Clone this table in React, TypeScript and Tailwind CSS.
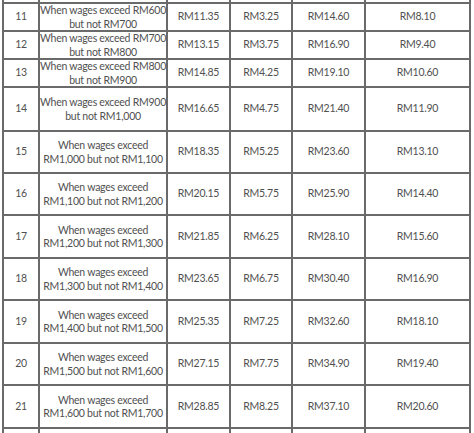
import React from "react";

type Row = [string, string, string, string, string, string, string];

const rows: Row[] = [
  ["11", "When wages exceed RM600", "but not RM700", "RM11.35", "RM3.25", "RM14.60", "RM8.10"],
  ["12", "When wages exceed RM700", "but not RM800", "RM13.15", "RM3.75", "RM16.90", "RM9.40"],
  ["13", "When wages exceed RM800", "but not RM900", "RM14.85", "RM4.25", "RM19.10", "RM10.60"],
  ["14", "When wages exceed RM900", "but not RM1,000", "RM16.65", "RM4.75", "RM21.40", "RM11.90"],
  ["15", "When wages exceed", "RM1,000 but not RM1,100", "RM18.35", "RM5.25", "RM23.60", "RM13.10"],
  ["16", "When wages exceed", "RM1,100 but not RM1,200", "RM20.15", "RM5.75", "RM25.90", "RM14.40"],
  ["17", "When wages exceed", "RM1,200 but not RM1,300", "RM21.85", "RM6.25", "RM28.10", "RM15.60"],
  ["18", "When wages exceed", "RM1,300 but not RM1,400", "RM23.65", "RM6.75", "RM30.40", "RM16.90"],
  ["19", "When wages exceed", "RM1,400 but not RM1,500", "RM25.35", "RM7.25", "RM32.60", "RM18.10"],
  ["20", "When wages exceed", "RM1,500 but not RM1,600", "RM27.15", "RM7.75", "RM34.90", "RM19.40"],
  ["21", "When wages exceed", "RM1,600 but not RM1,700", "RM28.85", "RM8.25", "RM37.10", "RM20.60"],
];

const cell = "bg-white flex items-center justify-center text-center";

export default function App() {
  return (
    <div className="w-[474px] h-[433px] overflow-hidden bg-white">
      <div
        className="ml-[2px] w-[469px] grid grid-cols-[34px_126px_61px_60px_71px_103px] grid-rows-[2px_26px_26px_26px_42px_40px_40px_41px_40px_41px_40px_41px_20px] gap-[2px] px-[2px] bg-[#6a6a6a] text-[10.5px] leading-[13.5px] tracking-[-0.25px] text-[#505050]"
        style={{ fontFamily: "Lato, 'Open Sans', sans-serif" }}
      >
        {Array.from({ length: 6 }).map((_, i) => (
          <div key={"top" + i} className="bg-white" />
        ))}
        {rows.map((r) => (
          <React.Fragment key={r[0]}>
            <div className={cell}>{r[0]}</div>
            <div className={cell + " flex-col pt-[1px]"}>
              <span className="whitespace-nowrap">{r[1]}</span>
              <span className="whitespace-nowrap">{r[2]}</span>
            </div>
            <div className={cell}>{r[3]}</div>
            <div className={cell}>{r[4]}</div>
            <div className={cell}>{r[5]}</div>
            <div className={cell}>{r[6]}</div>
          </React.Fragment>
        ))}
        {Array.from({ length: 6 }).map((_, i) => (
          <div key={"bot" + i} className="bg-white" />
        ))}
      </div>
    </div>
  );
}
